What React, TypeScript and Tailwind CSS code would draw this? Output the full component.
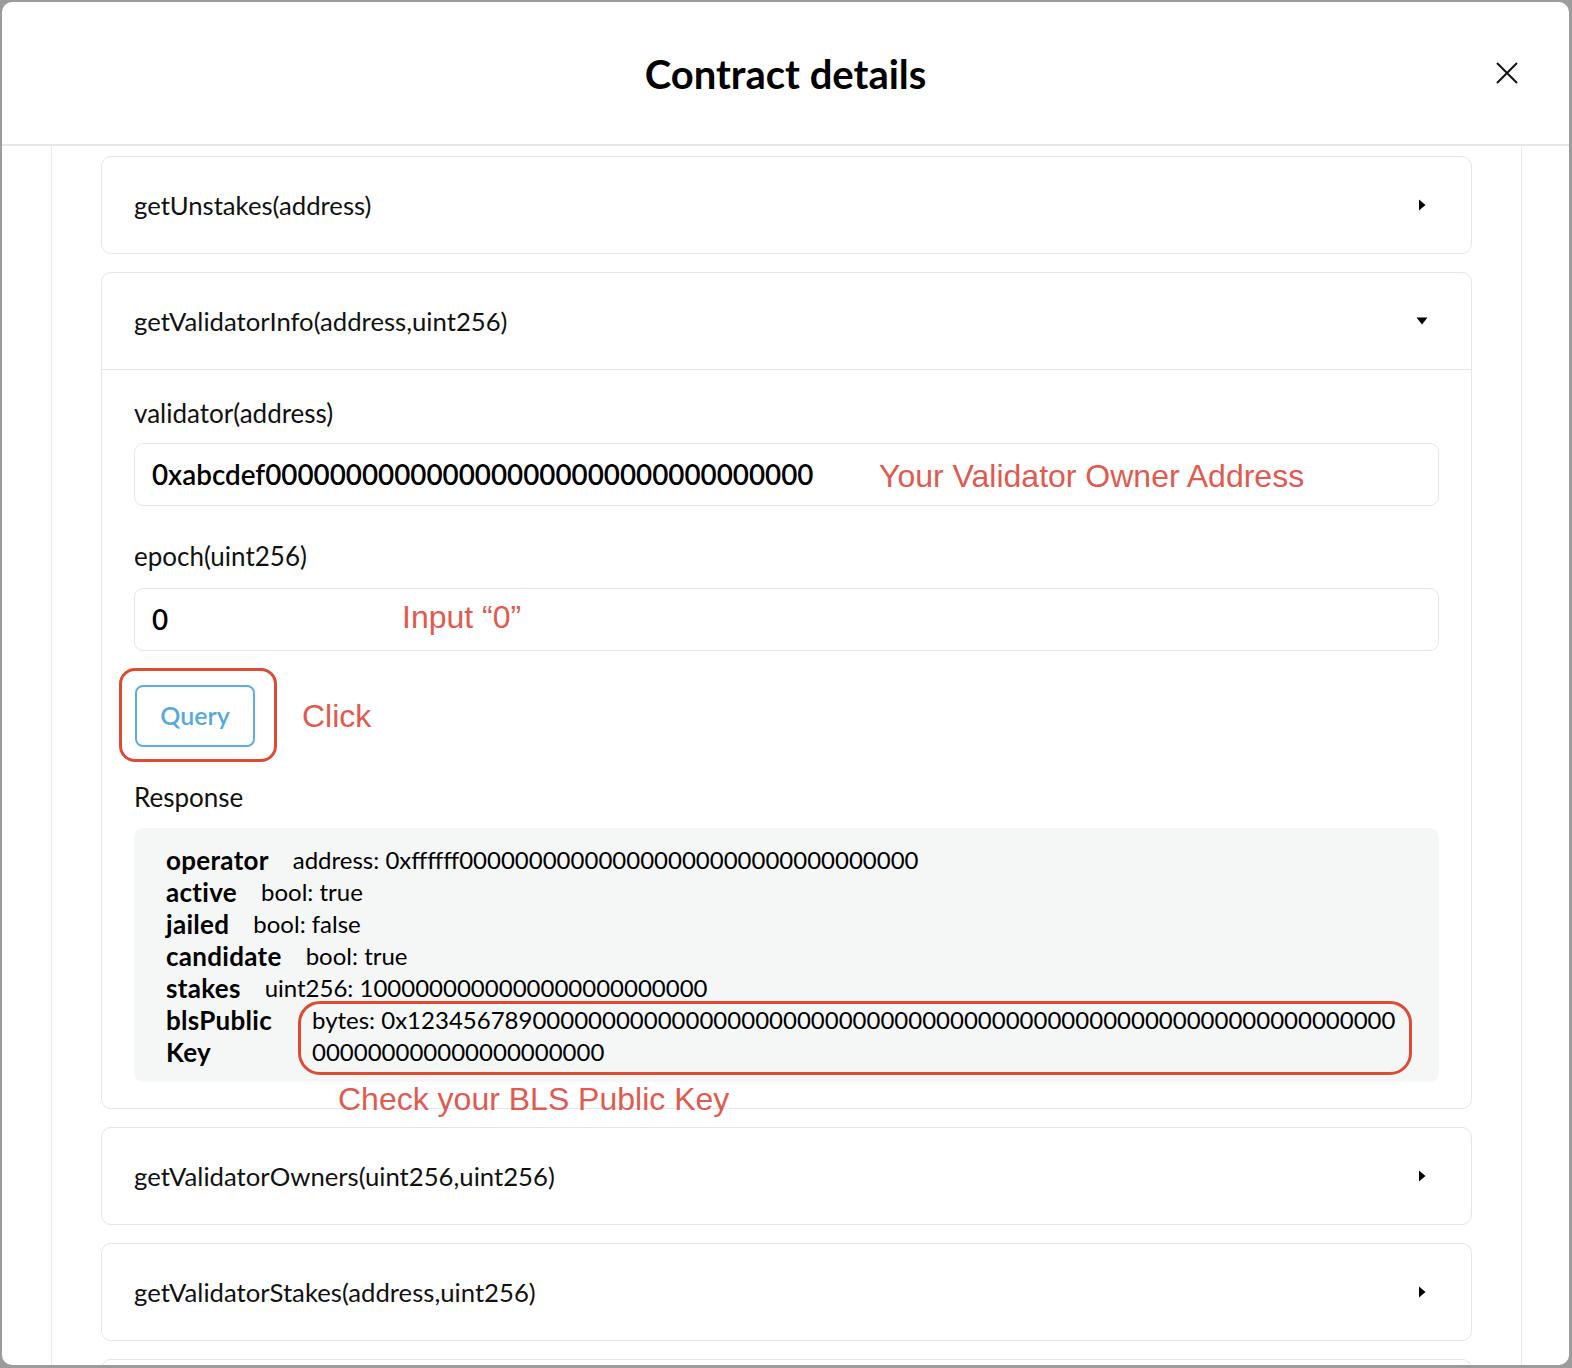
import React from "react";

const CaretRight = () => (
  <svg width="10" height="12" viewBox="0 0 10 12" className="shrink-0">
    <path d="M2 0.5 L8.5 6 L2 11.5 Z" fill="#000" />
  </svg>
);

const CaretDown = () => (
  <svg width="12" height="10" viewBox="0 0 12 10" className="shrink-0">
    <path d="M0.5 1.5 L11.5 1.5 L6 8.5 Z" fill="#000" />
  </svg>
);

const CollapsedCard = ({ title }: { title?: string }) => (
  <div className="border border-[#e5e6ec] rounded-[10px] bg-white shrink-0">
    <div className="h-[96px] flex items-center justify-between pl-[32px] pr-[44px]">
      <span className="text-[25.7px] leading-[32px] text-[#111]">{title}</span>
      {title ? <CaretRight /> : null}
    </div>
  </div>
);

const Row = ({ label, value }: { label: string; value: string }) => (
  <div className="flex gap-[24px] h-[32px] items-center">
    <span className="font-bold text-[26px] tracking-[0.3px]">{label}</span>
    <span>{value}</span>
  </div>
);

export default function App() {
  const zeros = (n: number) => "0".repeat(n);
  const red = "font-['Liberation_Sans',Arial,sans-serif] text-[#e15a4f]";
  return (
    <div className="w-full h-[1368px] bg-[#9c9c9c] pt-[2px] pl-[2px] overflow-hidden font-['Lato','Noto_Sans',sans-serif]">
      <div className="w-[1567px] h-[1363px] bg-white rounded-[10px] overflow-hidden flex flex-col">
        {/* header */}
        <div className="h-[144px] shrink-0 border-b-2 border-[#e4e6eb] relative flex items-center justify-center">
          <h1 className="text-[40px] font-bold text-black leading-none mt-[2px]">Contract details</h1>
          <button className="absolute left-[1491px] top-[57px] w-[28px] h-[28px] flex items-center justify-center">
            <svg width="24" height="24" viewBox="0 0 24 24">
              <path d="M2 2 L22 22 M22 2 L2 22" stroke="#111" strokeWidth="2" />
            </svg>
          </button>
        </div>

        {/* body */}
        <div className="flex-1 overflow-hidden pl-[49px] pr-[47px]">
          <div className="h-full border-x border-[#e9eaef] px-[49px] pt-[10px] flex flex-col gap-[18px]">
            <CollapsedCard title="getUnstakes(address)" />

            {/* expanded card */}
            <div className="border border-[#e5e6ec] rounded-[10px] bg-white shrink-0">
              <div className="h-[97px] flex items-center justify-between pl-[32px] pr-[43px] border-b border-[#e5e6ec]">
                <span className="text-[25.7px] leading-[32px] text-[#111]">getValidatorInfo(address,uint256)</span>
                <CaretDown />
              </div>
              <div className="relative px-[32px] pt-[27px] pb-[26px] text-[#111]">
                <div className="text-[26px] leading-[32px]">validator(address)</div>
                <div className="relative mt-[14px] h-[63px] border border-[#e5e6ec] rounded-[9px] flex items-center pl-[17px]">
                  <span className="text-[27.8px] font-semibold text-black">0xabcdef{zeros(34)}</span>
                  <span className={`absolute left-[744px] top-1/2 -translate-y-1/2 mt-[1px] text-[32px] leading-none ${red}`}>
                    Your Validator Owner Address
                  </span>
                </div>

                <div className="mt-[34px] text-[26px] leading-[32px]">epoch(uint256)</div>
                <div className="relative mt-[16px] h-[63px] border border-[#e5e6ec] rounded-[9px] flex items-center pl-[17px]">
                  <span className="text-[27.8px] font-semibold text-black">0</span>
                  <span className={`absolute left-[267px] top-[12px] text-[32px] leading-none ${red}`}>
                    Input “0”
                  </span>
                </div>

                <div className="mt-[34px] flex items-center gap-[47px] pl-[1px]">
                  <button className="w-[120px] h-[62px] border-2 border-[#5eaee0] rounded-[8px] text-[#57a9dc] text-[25px] font-semibold">
                    Query
                  </button>
                  <span className={`text-[32px] leading-none ${red}`}>Click</span>
                </div>
                <div className="absolute left-[17px] top-[298px] w-[158px] h-[94px] border-[3px] border-[#dd4b34] rounded-[16px] pointer-events-none" />

                <div className="mt-[34px] text-[26px] leading-[32px]">Response</div>
                <div className="relative mt-[15px] h-[254px] bg-[#f5f6f6] rounded-[9px] pl-[32px] pt-[16px] text-[24px] text-black">
                  <Row label="operator" value={`address: 0xffffff${zeros(33)}`} />
                  <Row label="active" value="bool: true" />
                  <Row label="jailed" value="bool: false" />
                  <Row label="candidate" value="bool: true" />
                  <Row label="stakes" value={`uint256: 1${zeros(24)}`} />
                  <div className="flex gap-[24px]">
                    <div className="w-[122px] font-bold text-[26px] tracking-[0.3px] leading-[32px] shrink-0">
                      blsPublic
                      <br />
                      Key
                    </div>
                    <div className="leading-[32px] whitespace-nowrap">
                      bytes: 0x123456789{zeros(62)}
                      <br />
                      {zeros(21)}
                    </div>
                  </div>
                  <div className="absolute left-[164px] top-[173px] w-[1114px] h-[74px] border-[3px] border-[#dd4b34] rounded-[22px] pointer-events-none" />
                </div>

                <span className={`absolute left-[236px] top-[713px] text-[32px] leading-none ${red}`}>
                  Check your BLS Public Key
                </span>
              </div>
            </div>

            <CollapsedCard title="getValidatorOwners(uint256,uint256)" />
            <CollapsedCard title="getValidatorStakes(address,uint256)" />
            <CollapsedCard />
          </div>
        </div>
      </div>
    </div>
  );
}
